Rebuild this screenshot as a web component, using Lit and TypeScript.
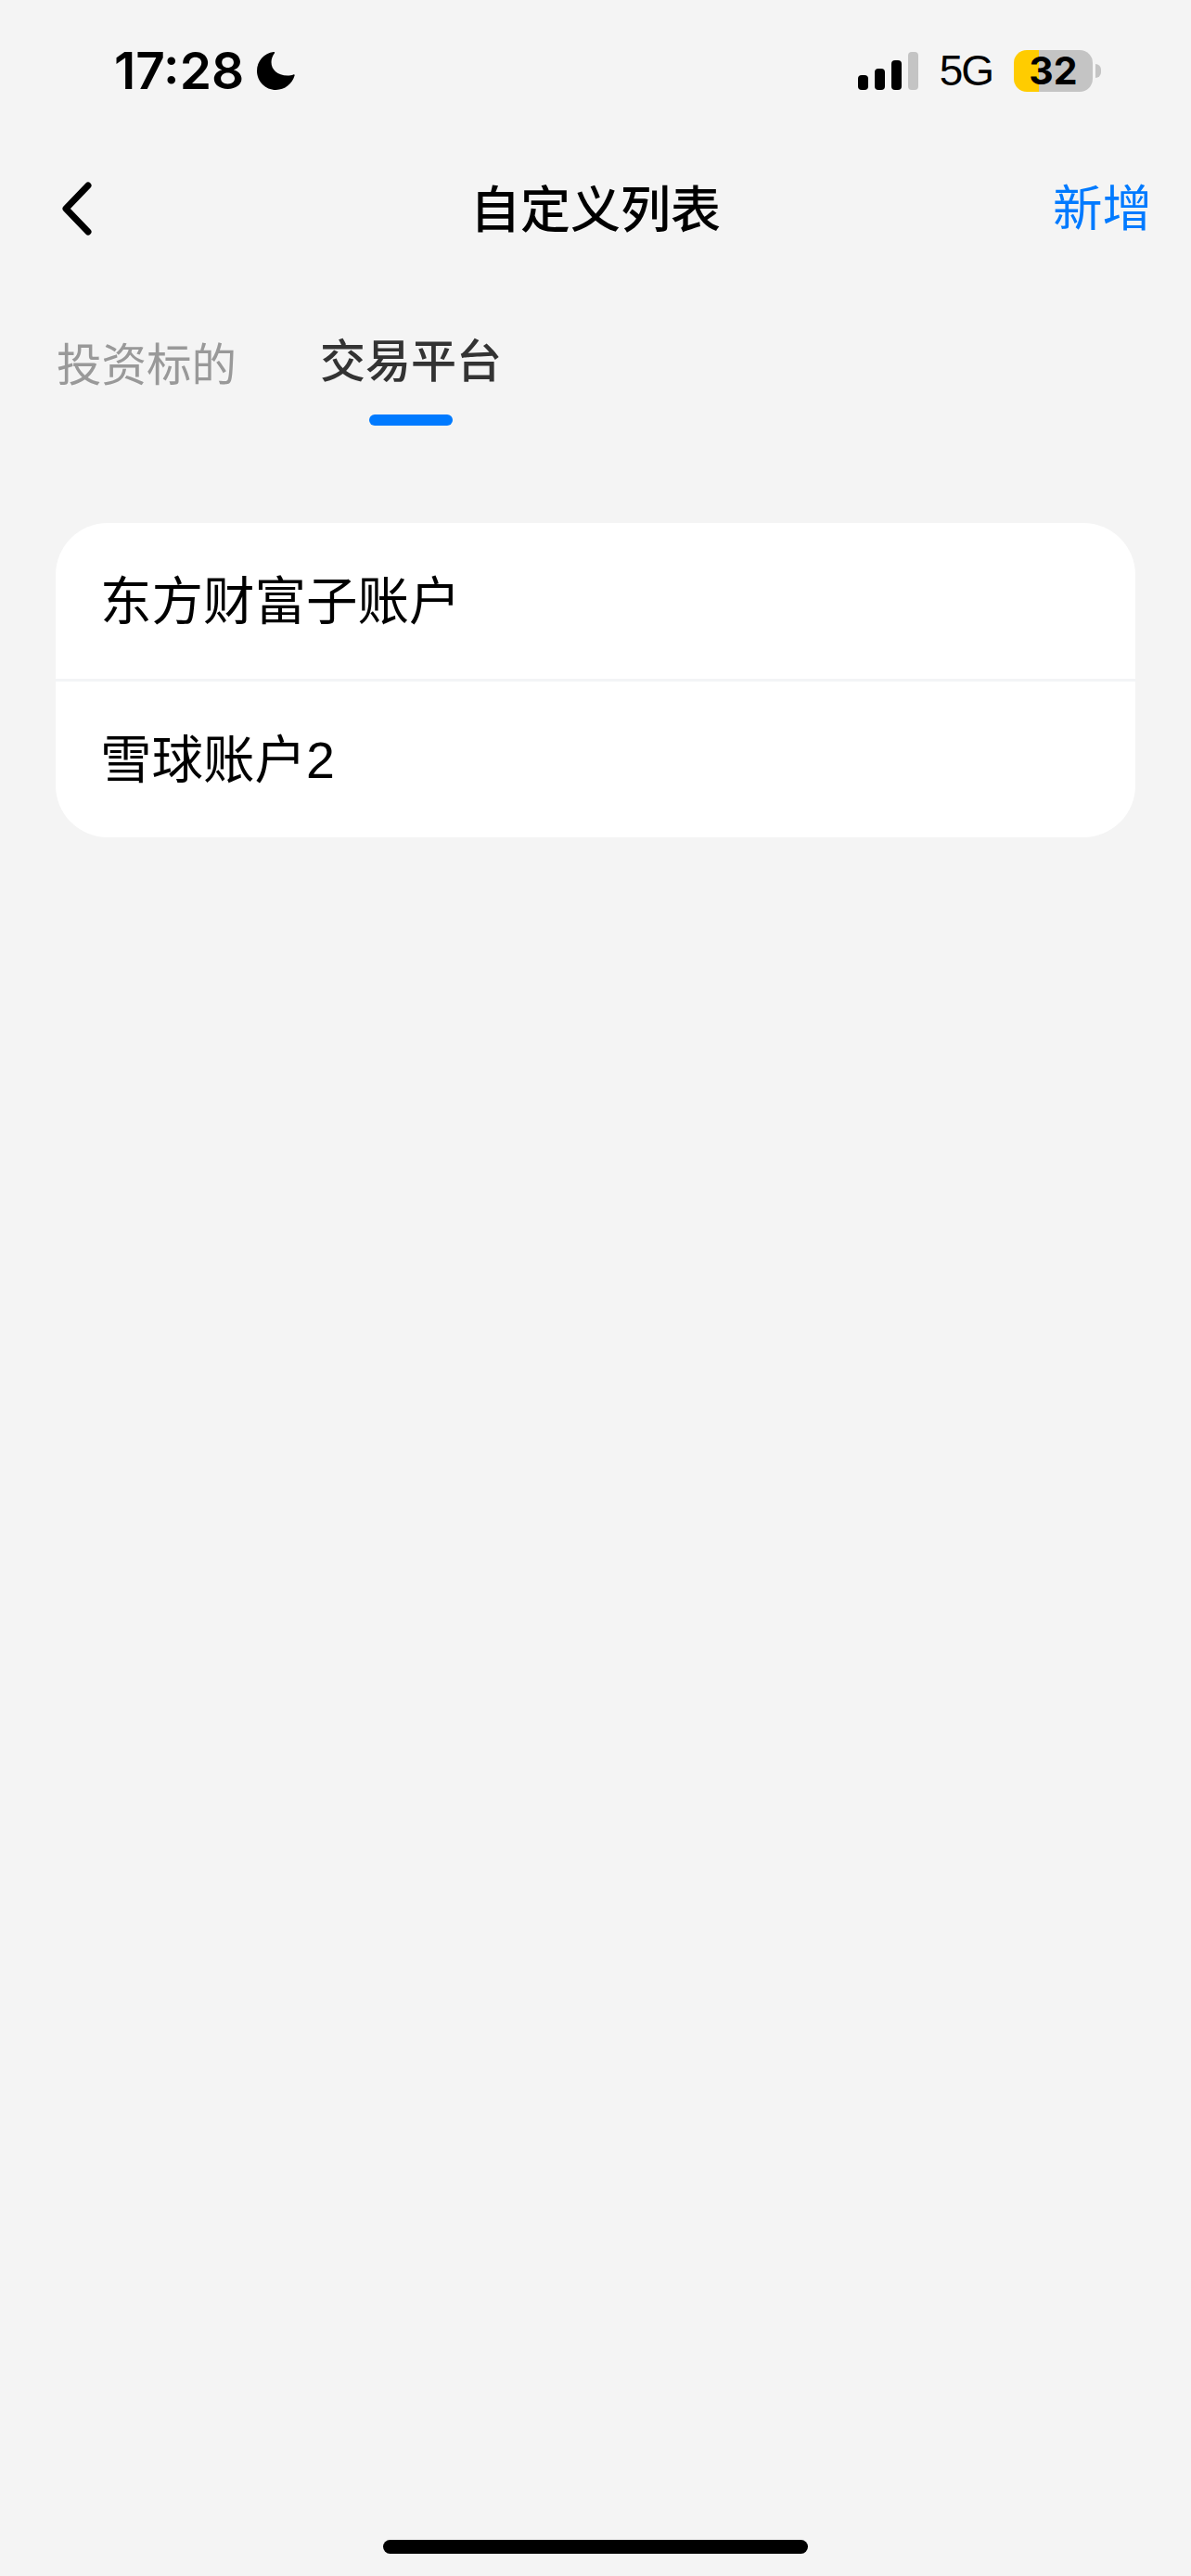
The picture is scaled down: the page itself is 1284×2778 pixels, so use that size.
import { LitElement, css, html } from "lit";
import { customElement, state } from "lit/decorators.js";

@customElement("app-root")
export class AppRoot extends LitElement {
  static styles = css`
    :host {
      display: block;
    }

    .page {
      display: flex;
      flex-direction: column;
      height: 2778px;
      background: #f4f4f4;
      font-family: "Liberation Sans", "Noto Sans CJK SC", sans-serif;
      color: #000;
    }

    .status {
      display: flex;
      align-items: center;
      justify-content: space-between;
      height: 152px;
      padding: 0 97px 0 123px;
      flex: none;
    }

    .status-left {
      display: flex;
      align-items: center;
      gap: 14px;
    }

    .time {
      font-family: Inter, sans-serif;
      font-size: 55px;
      font-weight: 600;
      line-height: 60px;
    }

    .moon {
      display: block;
      width: 41px;
      height: 41px;
    }

    .status-right {
      display: flex;
      align-items: center;
    }

    .signal {
      display: flex;
      align-items: flex-end;
      gap: 7px;
      height: 41px;
    }

    .signal span {
      width: 11px;
      border-radius: 4px;
      background: #000;
    }

    .signal span.off {
      background: #c4c4c4;
    }

    .network {
      margin: 0 23px 0 23px;
      font-size: 46px;
      line-height: 50px;
      letter-spacing: -2px;
    }

    .battery {
      display: flex;
      align-items: center;
      gap: 3px;
    }

    .battery-body {
      width: 85px;
      height: 45px;
      border-radius: 14px;
      background: linear-gradient(90deg, #ffcc00 32%, #c4c4c4 32%);
      text-align: center;
      font-family: Inter, sans-serif;
      font-size: 41px;
      font-weight: 700;
      line-height: 45px;
    }

    .battery-cap {
      width: 6px;
      height: 15px;
      border-radius: 0 8px 8px 0;
      background: #c4c4c4;
    }

    .nav {
      display: grid;
      grid-template-columns: 1fr auto 1fr;
      align-items: center;
      height: 146px;
      padding: 0 42px;
      flex: none;
    }

    .back {
      display: block;
      width: 32px;
      height: 58px;
      margin-left: 25px;
    }

    .title {
      padding-top: 3px;
      font-size: 54px;
      font-weight: 500;
      line-height: 70px;
    }

    .add {
      justify-self: end;
      padding-top: 2px;
      color: #007aff;
      font-size: 53.5px;
      line-height: 70px;
    }

    .tabs {
      display: flex;
      align-items: flex-start;
      gap: 90px;
      padding: 62px 0 0 61px;
      flex: none;
    }

    .tab {
      display: flex;
      flex-direction: column;
      align-items: center;
      padding-top: 4px;
      color: #999;
      font-size: 48.5px;
      line-height: 60px;
    }

    .tab.active {
      padding-top: 0;
      color: #333;
      font-size: 49px;
      font-weight: 500;
    }

    .tab-line {
      width: 90px;
      height: 12px;
      margin-top: 27px;
      border-radius: 6px;
      background: #007aff;
    }

    .card {
      margin: 105px 60px 0;
      border-radius: 56px;
      background: #fff;
      overflow: hidden;
      flex: none;
    }

    .row {
      height: 168px;
      padding-left: 48px;
      font-size: 55.5px;
      line-height: 170px;
    }

    .row + .row {
      border-top: 3px solid #f3f4f6;
    }

    .home {
      width: 458px;
      height: 15px;
      margin: auto auto 24px;
      border-radius: 8px;
      background: #000;
      flex: none;
    }
  `;

  @state()
  private tabs = ["投资标的", "交易平台"];

  @state()
  private activeTab = 1;

  @state()
  private accounts = ["东方财富子账户", "雪球账户2"];

  private signalBars = [16, 23, 32, 41];

  private renderStatus() {
    return html`<div class="status">
      <div class="status-left">
        <span class="time">17:28</span>
        <svg class="moon" viewBox="0 0 41 41">
          <path
            d="M19 1.2c.4-.7-.1-1.4-1-1.2C7.7 1.2 0 10 0 20.5 0 31.8 9.2 41 20.5 41 30 41 38 34.6 40.6 25.6c.3-.9-.5-1.5-1.3-1.2-2 .8-4 1.1-6.3 1.1C22 25.5 15.5 19 15.5 11 15.5 7.5 16.8 4.2 19 1.2z"
          />
        </svg>
      </div>
      <div class="status-right">
        <div class="signal">
          ${this.signalBars.map(
            (h, i) =>
              html`<span class=${i === 3 ? "off" : ""} style="height:${h}px"></span>`
          )}
        </div>
        <span class="network">5G</span>
        <div class="battery">
          <div class="battery-body">32</div>
          <div class="battery-cap"></div>
        </div>
      </div>
    </div>`;
  }

  render() {
    return html`<div class="page">
      ${this.renderStatus()}
      <div class="nav">
        <svg class="back" viewBox="0 0 32 58" fill="none">
          <path
            d="M28 4 4 29l24 25"
            stroke="#000"
            stroke-width="7"
            stroke-linecap="round"
            stroke-linejoin="round"
          />
        </svg>
        <div class="title">自定义列表</div>
        <div class="add">新增</div>
      </div>
      <div class="tabs">
        ${this.tabs.map((tab, i) =>
          i === this.activeTab
            ? html`<div class="tab active">${tab}<div class="tab-line"></div></div>`
            : html`<div class="tab">${tab}</div>`
        )}
      </div>
      <div class="card">
        ${this.accounts.map(account => html`<div class="row">${account}</div>`)}
      </div>
      <div class="home"></div>
    </div>`;
  }
}
